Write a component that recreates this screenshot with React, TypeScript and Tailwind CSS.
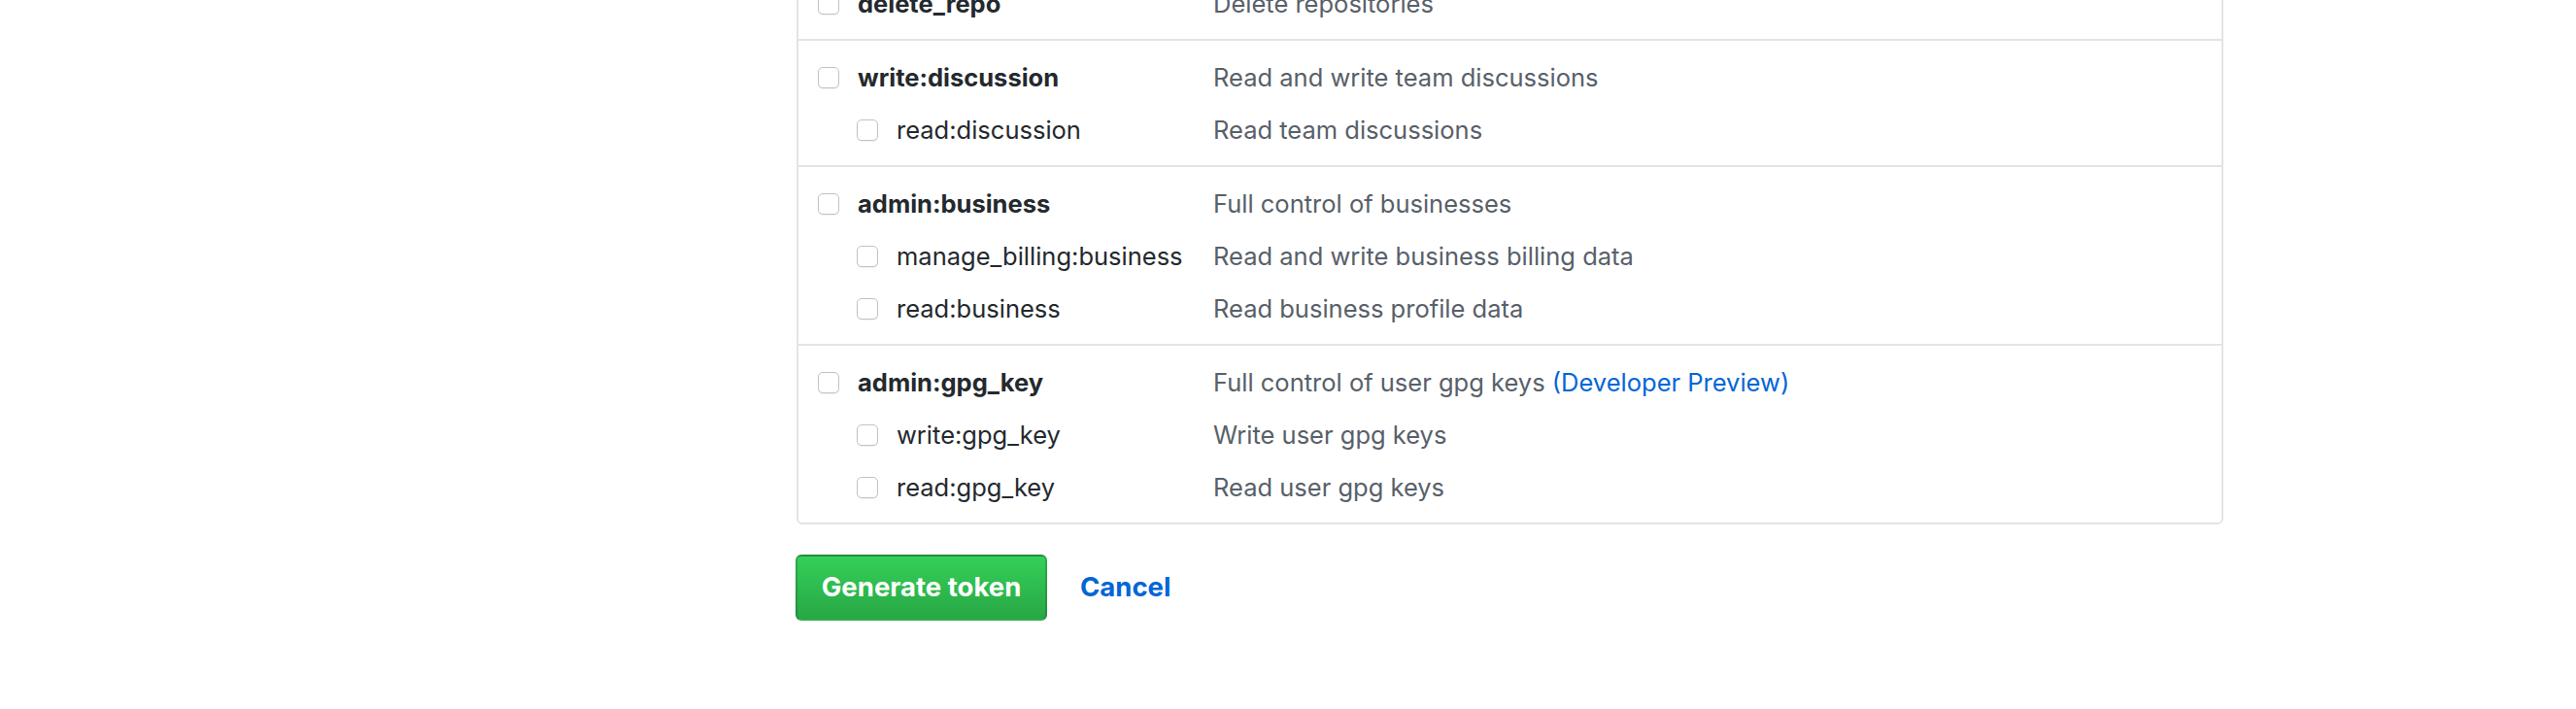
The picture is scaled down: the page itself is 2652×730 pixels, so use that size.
import React from "react";

type Row = { name: string; desc: string; sub?: boolean; preview?: boolean };

const groups: Row[][] = [
  [{ name: "delete_repo", desc: "Delete repositories" }],
  [
    { name: "write:discussion", desc: "Read and write team discussions" },
    { name: "read:discussion", desc: "Read team discussions", sub: true },
  ],
  [
    { name: "admin:business", desc: "Full control of businesses" },
    { name: "manage_billing:business", desc: "Read and write business billing data", sub: true },
    { name: "read:business", desc: "Read business profile data", sub: true },
  ],
  [
    { name: "admin:gpg_key", desc: "Full control of user gpg keys", preview: true },
    { name: "write:gpg_key", desc: "Write user gpg keys", sub: true },
    { name: "read:gpg_key", desc: "Read user gpg keys", sub: true },
  ],
];

function Checkbox() {
  return (
    <span className="block w-[22px] h-[22px] shrink-0 rounded-[5px] border-[1.5px] border-[#c2c2c2] bg-white shadow-[0_1px_1px_rgba(0,0,0,0.06)]" />
  );
}

function ScopeRow({ row }: { row: Row }) {
  return (
    <div className="flex items-center h-[54px]">
      <div className={`flex items-center w-[407px] shrink-0 ${row.sub ? "pl-[40px]" : ""}`}>
        <Checkbox />
        <span
          className={`ml-[19px] text-[#24292e] whitespace-nowrap ${row.sub ? "font-normal" : "font-bold"}`}
        >
          {row.name}
        </span>
      </div>
      <div className="text-[#586069] whitespace-nowrap">
        {row.desc}
        {row.preview && <span className="text-[#0366d6]"> (Developer Preview)</span>}
      </div>
    </div>
  );
}

export default function App() {
  return (
    <div
      className="w-[2652px] h-[730px] overflow-hidden bg-white text-[25.5px] leading-[1.5]"
      style={{ fontFamily: "Inter, 'Liberation Sans', sans-serif" }}
    >
      <div className="flex">
        <aside className="w-[820px] shrink-0" />
        <main className="w-[1469px] shrink-0">
          <div className="mt-[-36px] border-2 border-[#e1e4e8] rounded-[6px]">
            {groups.map((g, i) => (
              <div
                key={i}
                className={`pl-[20px] pt-[11px] pb-[9px] ${i > 0 ? "border-t-2 border-[#e1e4e8]" : ""}`}
              >
                {g.map((r) => (
                  <ScopeRow key={r.name} row={r} />
                ))}
              </div>
            ))}
          </div>
          <div className="flex items-center mt-[31px]">
            <button className="-ml-[1px] w-[259px] h-[68px] rounded-[6px] border-2 border-[rgba(27,31,35,0.2)] bg-gradient-to-b from-[#34d058] to-[#28a745] text-white font-bold text-[27.5px]">
              Generate token
            </button>
            <a className="ml-[34px] text-[#0366d6] font-bold text-[27.5px]">Cancel</a>
          </div>
        </main>
      </div>
    </div>
  );
}
